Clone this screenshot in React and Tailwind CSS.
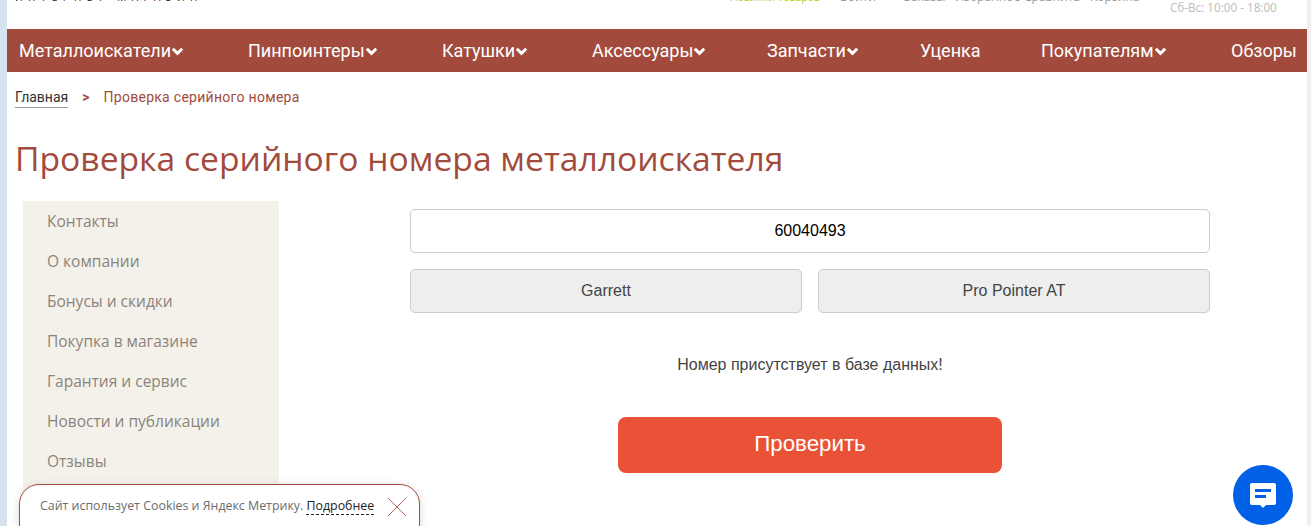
const navItems = [
  { label: "Металлоискатели", arrow: true, width: "w-[229px]" },
  { label: "Пинпоинтеры", arrow: true, width: "w-[194px]" },
  { label: "Катушки", arrow: true, width: "w-[150px]" },
  { label: "Аксессуары", arrow: true, width: "w-[175px]" },
  { label: "Запчасти", arrow: true, width: "w-[153px]" },
  { label: "Уценка", width: "w-[121px]" },
  { label: "Покупателям", arrow: true, width: "w-[190px]" },
  { label: "Обзоры", width: "w-auto" },
];

const sideLinks = [
  "Контакты",
  "О компании",
  "Бонусы и скидки",
  "Покупка в магазине",
  "Гарантия и сервис",
  "Новости и публикации",
  "Отзывы",
  "Доставка",
];

function Chevron() {
  return (
    <svg width="13" height="9" viewBox="0 0 13 9" className="mt-[2px] shrink-0">
      <path d="M1.8 1.8 L6.5 6.4 L11.2 1.8" fill="none" stroke="white" strokeWidth="3" />
    </svg>
  );
}

function TopBar() {
  return (
    <div className="h-[29px] overflow-hidden relative font-['Open_Sans',sans-serif]">
      <div className="flex items-start -mt-[9px] pl-[8px] text-[12px] leading-[12px] text-[#9a9a9a]">
        <span className="w-[715px] text-[#222] text-[10px] tracking-[5.4px] whitespace-nowrap">ИНТЕРНЕТ-МАГАЗИН</span>
        <span className="w-[110px] text-[#a8d400] text-[10.5px] whitespace-nowrap">Новинки товаров</span>
        <span className="w-[64px]">Войти</span>
        <span className="w-[51px]">Заказы</span>
        <span className="w-[69px]">Избранное</span>
        <span className="w-[66px]">Сравнить</span>
        <span className="w-[80px]">Корзина</span>
        <span className="mt-[10px] text-[11.7px] text-[#bdbdbd] whitespace-nowrap">Сб-Вс: 10:00 - 18:00</span>
      </div>
    </div>
  );
}

function CookieBar() {
  return (
    <div className="absolute left-[19px] top-[484px] w-[401px] h-[60px] bg-white border border-[#a24b3c] rounded-[20px] shadow-[0_2px_10px_rgba(0,0,0,0.15)] flex items-start pl-[20px] pt-[13px] font-['Open_Sans',sans-serif] text-[12.4px] leading-[16px] text-[#6b6b6b]">
      <span className="whitespace-nowrap">
        Сайт использует Cookies и Яндекс Метрику.{" "}
        <span className="text-[#222] border-b border-dashed border-[#222]">Подробнее</span>
      </span>
      <svg width="20" height="20" viewBox="0 0 20 20" className="ml-[13px] -mt-[1px] shrink-0">
        <path d="M1 1 L19 19 M19 1 L1 19" stroke="#b5685b" strokeWidth="1" fill="none" />
      </svg>
    </div>
  );
}

function ChatButton() {
  return (
    <div className="absolute left-[1233px] top-[465px] w-[60px] h-[60px] rounded-full bg-[#0061e8] flex items-center justify-center">
      <svg width="28" height="26" viewBox="0 0 28 26">
        <path d="M3 1 H25 a2 2 0 0 1 2 2 V21 a2 2 0 0 1 -2 2 H17 L14 26 L11 23 H3 a2 2 0 0 1 -2 -2 V3 a2 2 0 0 1 2 -2 Z" fill="white" />
        <rect x="6" y="7" width="16" height="3" fill="#0061e8" />
        <rect x="6" y="13" width="11" height="3" fill="#0061e8" />
      </svg>
    </div>
  );
}

export default function App() {
  return (
    <div className="relative h-[526px] overflow-hidden bg-white flex">
      <div className="w-[7px] shrink-0 bg-[#d6e3ee]"></div>

      <div className="w-[1300px] shrink-0">
        <TopBar />

        <nav className="h-[43px] pb-[1px] bg-[#a24b3c] flex items-center pl-[12px] text-white text-[18px] font-['Roboto',sans-serif]">
          {navItems.map((item) => (
            <a key={item.label} className={`${item.width} shrink-0 flex items-center whitespace-nowrap`}>
              {item.label}
              {item.arrow && <Chevron />}
            </a>
          ))}
        </nav>

        <div className="pl-[8px] pt-[16px] flex items-start text-[14px] leading-[18px] font-['Roboto',sans-serif]">
          <a className="text-[#333] border-b border-[#999] pb-[1px]">Главная</a>
          <span className="ml-[14px] mr-[14px] text-[#a24b3c] font-bold">&gt;</span>
          <span className="text-[#a24b3c] tracking-[0.28px]">Проверка серийного номера</span>
        </div>

        <h1 className="pl-[8px] mt-[28px] text-[33.65px] leading-[44px] text-[#a24b3c] font-['Open_Sans',sans-serif] whitespace-nowrap">
          Проверка серийного номера металлоискателя
        </h1>

        <div className="flex items-start mt-[21px] pl-[16px]">
          <aside className="w-[256px] shrink-0 bg-[#f4f1ea] h-[340px] pl-[24px] font-['Open_Sans',sans-serif] text-[15.5px] text-[#8a847c]">
            {sideLinks.map((link) => (
              <div key={link} className="h-[40px] leading-[40px]">{link}</div>
            ))}
          </aside>

          <main className="ml-[131px] w-[800px] pt-[8px] font-['Liberation_Sans',sans-serif] text-[16px]">
            <div className="h-[44px] border border-[#ccc] rounded-[5px] flex items-center justify-center text-black">60040493</div>
            <div className="flex gap-[16px] mt-[16px]">
              <div className="flex-1 h-[44px] bg-[#eeeeee] border border-[#ccc] rounded-[5px] flex items-center justify-center text-[#444]">Garrett</div>
              <div className="flex-1 h-[44px] bg-[#eeeeee] border border-[#ccc] rounded-[5px] flex items-center justify-center text-[#444]">Pro Pointer AT</div>
            </div>
            <p className="mt-[43px] text-center leading-[18px] text-[#444]">Номер присутствует в базе данных!</p>
            <button className="block mx-auto mt-[43px] w-[384px] h-[56px] pb-[2px] rounded-[8px] bg-[#ea5238] text-white text-[22.3px]">Проверить</button>
          </main>
        </div>
      </div>

      <div className="flex-1 bg-[#f1f1f1]"></div>

      <CookieBar />
      <ChatButton />
    </div>
  );
}
